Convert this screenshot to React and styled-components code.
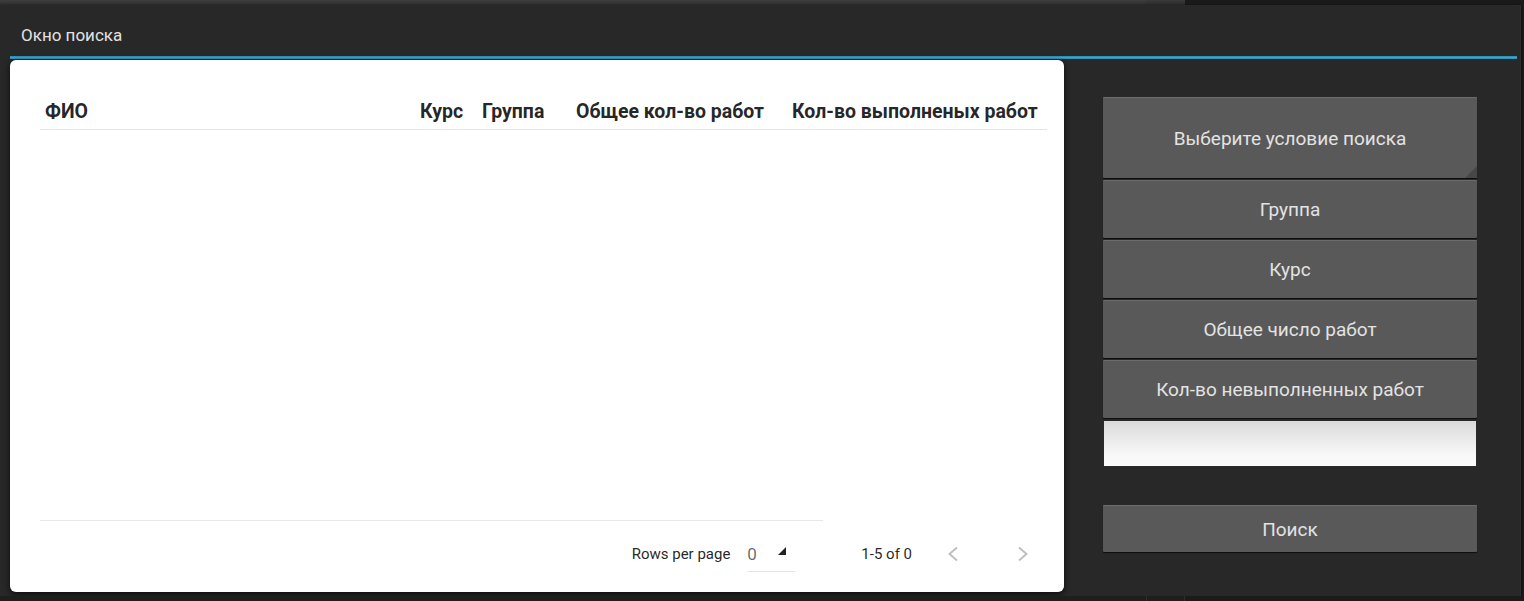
import React from "react";
import styled, { createGlobalStyle } from "styled-components";

const GlobalStyle = createGlobalStyle`
  html, body { margin: 0; padding: 0; background: #1b1b1b; }
  body { font-family: Roboto, "Noto Sans", "DejaVu Sans", sans-serif; }
  * { box-sizing: border-box; }
`;

const Desktop = styled.div`
  width: 1524px;
  height: 601px;
  overflow: hidden;
  display: flex;
  flex-direction: column;
  background: #1c1c1c;
`;

const Strip = styled.div`
  height: ${(p) => p.$h}px;
  display: flex;
  flex: none;
`;

const StripSeg = styled.div`
  width: ${(p) => (p.$w ? `${p.$w}px` : "auto")};
  flex: ${(p) => (p.$w ? "none" : "1")};
  background: ${(p) => p.$bg};
  border-right: ${(p) => (p.$line ? "1px solid #2e2e2e" : "none")};
`;

const Window = styled.div`
  width: 1521px;
  height: 591px;
  flex: none;
  background: #282828;
  box-shadow: 0 1px 3px rgba(0, 0, 0, 0.7), inset -1px 0 0 #2e2e2e;
  display: flex;
  flex-direction: column;
`;

const TitleBar = styled.div`
  height: 51px;
  display: flex;
  align-items: center;
  padding: 9px 0 0 21px;
  color: #e2e2e2;
  font-size: 17px;
`;

const Accent = styled.div`
  height: 3px;
  margin: 0 4px 0 10px;
  background: linear-gradient(#2a86a8, #36a9d4 50%, #2a86a8);
`;

const Body = styled.div`
  flex: 1;
  display: flex;
  padding-top: 1px;
`;

const Card = styled.div`
  width: 1054px;
  height: 532px;
  margin-left: 10px;
  background: #ffffff;
  border-radius: 6px;
  box-shadow: 0 2px 6px rgba(0, 0, 0, 0.75);
  padding: 34px 17px 0 30px;
  display: flex;
  flex-direction: column;
`;

const HeadRow = styled.div`
  display: grid;
  grid-template-columns: 375px 62px 94px 216px 260px;
  height: 36px;
  border-bottom: 1px solid #e4e4e4;
  align-items: center;
`;

const HeadCell = styled.div`
  padding-left: 5px;
  font-weight: 700;
  font-size: 19.5px;
  color: rgba(0, 0, 0, 0.87);
  white-space: nowrap;
`;

const TableBody = styled.div`
  flex: 1;
`;

const FootLine = styled.div`
  width: 783px;
  height: 1px;
  background: #e8e8e8;
`;

const Pager = styled.div`
  height: 71px;
  display: flex;
  align-items: center;
  justify-content: flex-end;
  padding-bottom: 5px;
  font-size: 15px;
  color: rgba(0, 0, 0, 0.87);
`;

const Caption = styled.span`
  margin-left: ${(p) => p.$ml || 0}px;
  white-space: nowrap;
`;

const Select = styled.div`
  position: relative;
  width: 48px;
  height: 36px;
  margin-left: 17px;
  border-bottom: 1px solid #e6e6e6;
  display: flex;
  align-items: center;
  font-size: 17px;
  color: rgba(0, 0, 0, 0.6);
`;

const SelectArrow = styled.svg`
  position: absolute;
  left: 29px;
  top: 9px;
`;

const PageBtn = styled.div`
  width: 48px;
  height: 48px;
  margin-left: ${(p) => p.$ml}px;
  display: flex;
  align-items: center;
  justify-content: center;
`;

const Side = styled.div`
  width: 374px;
  margin-left: 39px;
  padding-top: 37px;
  display: flex;
  flex-direction: column;
`;

const PanelButton = styled.div`
  position: relative;
  height: ${(p) => p.$h}px;
  margin-bottom: ${(p) => p.$mb}px;
  background: #595959;
  border-top: 1px solid #6c6c6c;
  box-shadow: 0 1px 1px rgba(0, 0, 0, 0.7);
  border-radius: 1px;
  display: flex;
  align-items: center;
  justify-content: center;
  color: #e3e3e3;
  font-size: 19px;
`;

const Corner = styled.div`
  position: absolute;
  right: 0;
  bottom: 0;
  width: 0;
  height: 0;
  border-left: 12px solid transparent;
  border-bottom: 12px solid #474747;
`;

const Field = styled.div`
  height: 47px;
  margin-bottom: 38px;
  border: 1px solid #2a2a2a;
  background: linear-gradient(#dadada, #f8f8f8 75%, #fbfbfb);
`;

const Chevron = ({ dir }) => (
  <svg width="24" height="24" viewBox="0 0 24 24">
    <path
      d={dir === "left" ? "M16 5.5 L8.5 12 L16 18.5" : "M8 5.5 L15.5 12 L8 18.5"}
      fill="none"
      stroke="#bdbdbd"
      strokeWidth="1.8"
    />
  </svg>
);

export default function App() {
  return (
    <>
      <GlobalStyle />
      <Desktop>
        <Strip $h={5}>
          <StripSeg $w={1146} $bg="linear-gradient(#3e3e3e, #2f2f2f)" />
          <StripSeg $w={39} $bg="linear-gradient(#3a3a3a, #2c2c2c)" />
          <StripSeg $bg="#1a1a1a" />
        </Strip>
        <Window>
          <TitleBar>Окно поиска</TitleBar>
          <Accent />
          <Body>
            <Card>
              <HeadRow>
                <HeadCell>ФИО</HeadCell>
                <HeadCell>Курс</HeadCell>
                <HeadCell>Группа</HeadCell>
                <HeadCell>Общее кол-во работ</HeadCell>
                <HeadCell>Кол-во выполненых работ</HeadCell>
              </HeadRow>
              <TableBody />
              <FootLine />
              <Pager>
                <Caption>Rows per page</Caption>
                <Select>
                  0
                  <SelectArrow width="12" height="12" viewBox="0 0 12 12">
                    <polygon points="10,2 10,10 2,10" fill="#222" />
                  </SelectArrow>
                </Select>
                <Caption $ml={66}>1-5 of 0</Caption>
                <PageBtn $ml={17}>
                  <Chevron dir="left" />
                </PageBtn>
                <PageBtn $ml={22}>
                  <Chevron dir="right" />
                </PageBtn>
              </Pager>
            </Card>
            <Side>
              <PanelButton $h={81} $mb={2}>
                Выберите условие поиска
                <Corner />
              </PanelButton>
              <PanelButton $h={58} $mb={2}>Группа</PanelButton>
              <PanelButton $h={58} $mb={2}>Курс</PanelButton>
              <PanelButton $h={58} $mb={2}>Общее число работ</PanelButton>
              <PanelButton $h={58} $mb={2}>Кол-во невыполненных работ</PanelButton>
              <Field />
              <PanelButton $h={47} $mb={0}>Поиск</PanelButton>
            </Side>
          </Body>
        </Window>
        <Strip $h={5}>
          <StripSeg $w={1147} $bg="#1e1e1e" $line />
          <StripSeg $w={38} $bg="#1e1e1e" $line />
          <StripSeg $bg="#1b1b1b" />
        </Strip>
      </Desktop>
    </>
  );
}
